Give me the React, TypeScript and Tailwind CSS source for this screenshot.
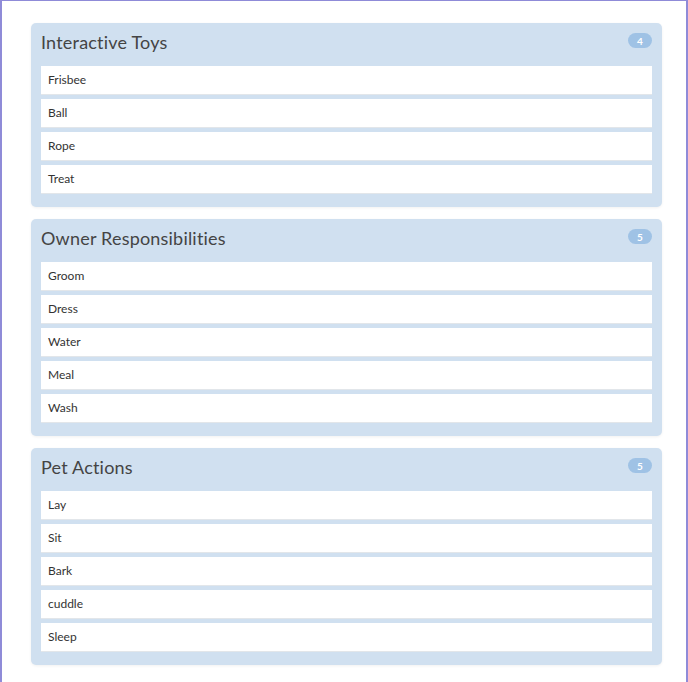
const groups = [
  { title: "Interactive Toys", items: ["Frisbee", "Ball", "Rope", "Treat"] },
  { title: "Owner Responsibilities", items: ["Groom", "Dress", "Water", "Meal", "Wash"] },
  { title: "Pet Actions", items: ["Lay", "Sit", "Bark", "cuddle", "Sleep"] },
];

function Panel({ title, items }: { title: string; items: string[] }) {
  return (
    <div className="relative w-[631px] rounded-[5px] bg-[#d0e0f0] px-[10px] pb-[13px] shadow-[0_1px_3px_rgba(0,0,0,0.06)]">
      <div className="flex h-[43px] items-start pt-[7px]">
        <h2 className="text-[18px] leading-[24px] tracking-[0.2px] text-[#444]">{title}</h2>
        <span className="ml-auto mt-[3px] flex h-[15px] min-w-[24px] items-center justify-center rounded-full bg-[#9fc2e5] px-[8px] text-[10px] font-bold leading-none text-white">
          {items.length}
        </span>
      </div>
      <div className="flex flex-col gap-[4px]">
        {items.map((it) => (
          <div
            key={it}
            className="flex h-[29px] items-center border-b border-[#e2e6ea] bg-white px-[7px] text-[12px] text-[#333]"
          >
            {it}
          </div>
        ))}
      </div>
    </div>
  );
}

export default function App() {
  return (
    <div
      className="min-h-[682px] border-x-2 border-t border-[#8f8bd8] bg-white pl-[29px] pt-[22px]"
      style={{ fontFamily: "Lato, 'Open Sans', sans-serif" }}
    >
      <div className="flex flex-col gap-[12px]">
        {groups.map((g) => (
          <Panel key={g.title} title={g.title} items={g.items} />
        ))}
      </div>
    </div>
  );
}
